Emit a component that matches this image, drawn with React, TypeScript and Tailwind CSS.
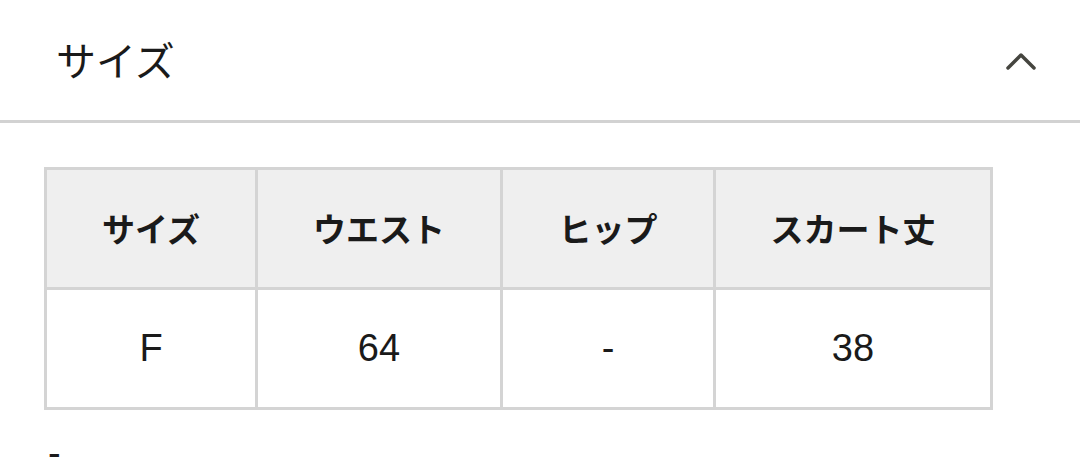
import React from "react";

const jp = { fontFamily: '"Noto Sans CJK JP", "Noto Sans", sans-serif' };
const num = { fontFamily: '"Liberation Sans", "Noto Sans CJK JP", sans-serif' };

export default function App() {
  const heads = ["サイズ", "ウエスト", "ヒップ", "スカート丈"];
  const vals = ["F", "64", "-", "38"];
  return (
    <div className="w-[1080px] h-[458px] overflow-hidden bg-white text-[#1a1a1a]" style={jp}>
      <div className="h-[123px] flex items-center justify-between pl-[56px] pr-[44px] border-b-[3px] border-[#d2d2d2]">
        <span className="text-[40px] font-normal leading-none mt-[-2px]">サイズ</span>
        <svg width="30" height="20" viewBox="0 0 30 20" className="mt-[1px]">
          <polyline points="2,17 15,4 28,17" fill="none" stroke="#45453f" strokeWidth="3.5" strokeLinecap="round" strokeLinejoin="round" />
        </svg>
      </div>
      <div className="pl-[44px] pt-[44px]">
        <div className="w-[949px] bg-[#d4d4d4] p-[3px] grid grid-cols-[208px_242px_210px_274px] grid-rows-[117px_117px] gap-[3px]">
          {heads.map((h) => (
            <div key={h} className="bg-[#efefef] flex items-center justify-center text-[33px] font-bold text-[#1a1a1a]">
              {h}
            </div>
          ))}
          {vals.map((v, i) => (
            <div key={i} className="bg-white flex items-center justify-center text-[38px] text-[#1a1a1a]" style={num}>
              {v}
            </div>
          ))}
        </div>
      </div>
      <div className="pl-[48px] pt-[23px] text-[38px] leading-[40px]" style={num}>-</div>
    </div>
  );
}
